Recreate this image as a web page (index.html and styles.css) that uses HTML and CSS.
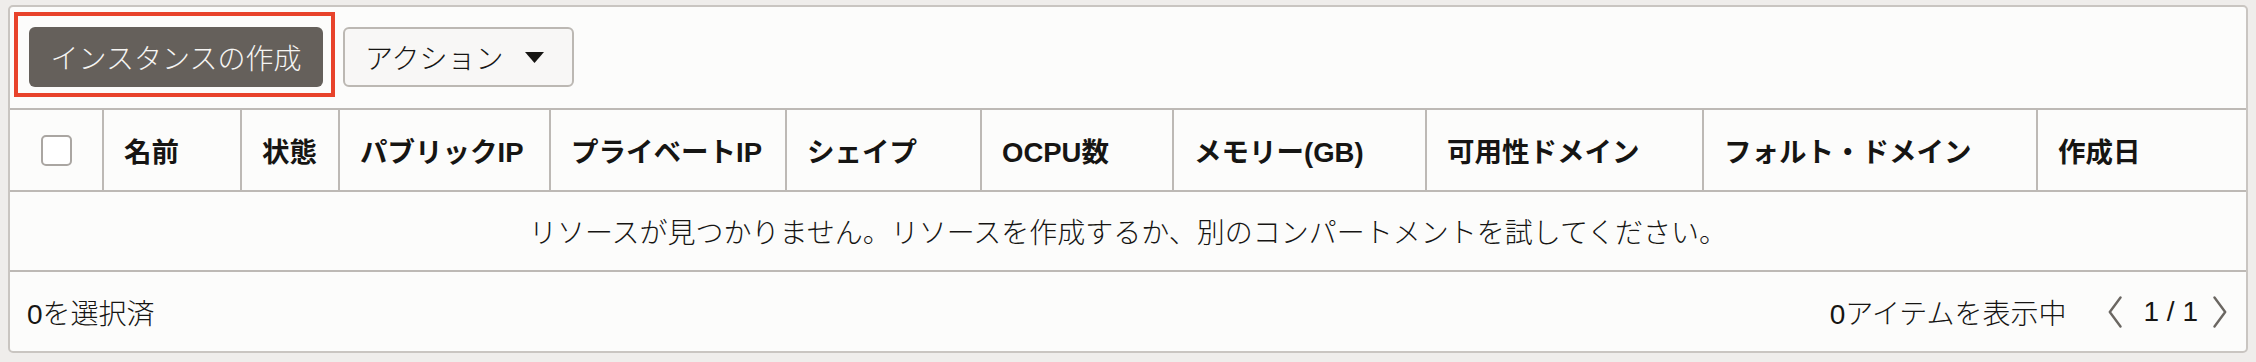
FILE: index.html
```html
<!DOCTYPE html>
<html lang="ja">
<head>
<meta charset="utf-8">
<title>インスタンス</title>
<link rel="stylesheet" href="styles.css">
</head>
<body>
<div class="card">
  <div class="toolbar">
    <div class="highlight">
      <button class="btn btn-primary">インスタンスの作成</button>
    </div>
    <button class="btn btn-secondary">
      <span>アクション</span>
      <svg class="caret" width="19" height="11" viewBox="0 0 19 11"><path d="M0 0 H19 L9.5 11 Z" fill="#161513"/></svg>
    </button>
  </div>
  <div class="thead">
    <div class="th th-check"><span class="checkbox"></span></div>
    <div class="th">名前</div>
    <div class="th">状態</div>
    <div class="th">パブリックIP</div>
    <div class="th">プライベートIP</div>
    <div class="th">シェイプ</div>
    <div class="th">OCPU数</div>
    <div class="th">メモリー(GB)</div>
    <div class="th">可用性ドメイン</div>
    <div class="th">フォルト・ドメイン</div>
    <div class="th">作成日</div>
  </div>
  <div class="empty">リソースが見つかりません。リソースを作成するか、別のコンパートメントを試してください。</div>
  <div class="footer">
    <span class="selected">0を選択済</span>
    <div class="pager">
      <span class="count">0アイテムを表示中</span>
      <svg class="chev" width="14" height="32" viewBox="0 0 14 32"><path d="M12.5 1.5 L1.8 16 L12.5 30.5" fill="none" stroke="#6b6762" stroke-width="2.4" stroke-linecap="round" stroke-linejoin="round"/></svg>
      <span class="page">1 / 1</span>
      <svg class="chev" width="14" height="32" viewBox="0 0 14 32"><path d="M1.5 1.5 L12.2 16 L1.5 30.5" fill="none" stroke="#6b6762" stroke-width="2.4" stroke-linecap="round" stroke-linejoin="round"/></svg>
    </div>
  </div>
</div>
</body>
</html>
```

FILE: styles.css
```css
* { box-sizing: border-box; }

html, body {
  margin: 0;
  padding: 0;
}

body {
  background: #efedeb;
  font-family: "Liberation Sans", "Noto Sans CJK JP", sans-serif;
  color: #161513;
  width: 2256px;
  height: 362px;
  overflow: hidden;
}

.card {
  margin: 5px 0 0 8px;
  width: 2240px;
  border: 2px solid #c9c5c1;
  border-radius: 5px;
  background: #fcfcfb;
}

.toolbar {
  display: flex;
  align-items: flex-start;
  gap: 8px;
  padding: 5px 4px 11px;
}

.highlight {
  border: 4px solid #e8432b;
  padding: 11px 8px 6px 11px;
}

.btn {
  font-family: "Liberation Sans", "Noto Sans CJK JP", sans-serif;
  font-size: 28px;
  font-weight: 300;
  height: 60px;
  border-radius: 6px;
  cursor: pointer;
  display: flex;
  align-items: center;
  padding: 0;
}

.btn-primary {
  width: 294px;
  justify-content: center;
  background: #65605b;
  color: #f6f5f3;
  border: none;
}

.btn-secondary {
  margin-top: 15px;
  width: 231px;
  background: #f8f7f6;
  color: #161513;
  border: 2px solid #bcb8b3;
  padding-left: 20px;
  gap: 21px;
}

.caret { display: block; }

.thead {
  display: grid;
  grid-template-columns: 92px 138px 98px 211px 236px 195px 192px 253px 277px 334px 1fr;
  border-top: 2px solid #bdb9b5;
  border-bottom: 2px solid #bdb9b5;
  height: 84px;
}

.th {
  display: flex;
  align-items: center;
  padding-left: 20px;
  border-left: 2px solid #bdb9b5;
  font-size: 27.5px;
  font-weight: 700;
  white-space: nowrap;
}

.th-check {
  border-left: none;
  padding-left: 0;
  justify-content: center;
}

.checkbox {
  width: 31px;
  height: 31px;
  border: 2px solid #aaa6a2;
  border-radius: 5px;
  background: #ffffff;
}

.empty {
  height: 80px;
  display: flex;
  align-items: center;
  justify-content: center;
  font-size: 28px;
  font-weight: 300;
  border-bottom: 2px solid #bdb9b5;
}

.footer {
  height: 79px;
  display: flex;
  align-items: center;
  justify-content: space-between;
  padding: 0 19px 0 17px;
  font-size: 28px;
  font-weight: 300;
}

.pager {
  display: flex;
  align-items: center;
}

.count { margin-right: 41px; }

.chev { display: block; }

.page { margin: 0 15px 0 22px; }
```
